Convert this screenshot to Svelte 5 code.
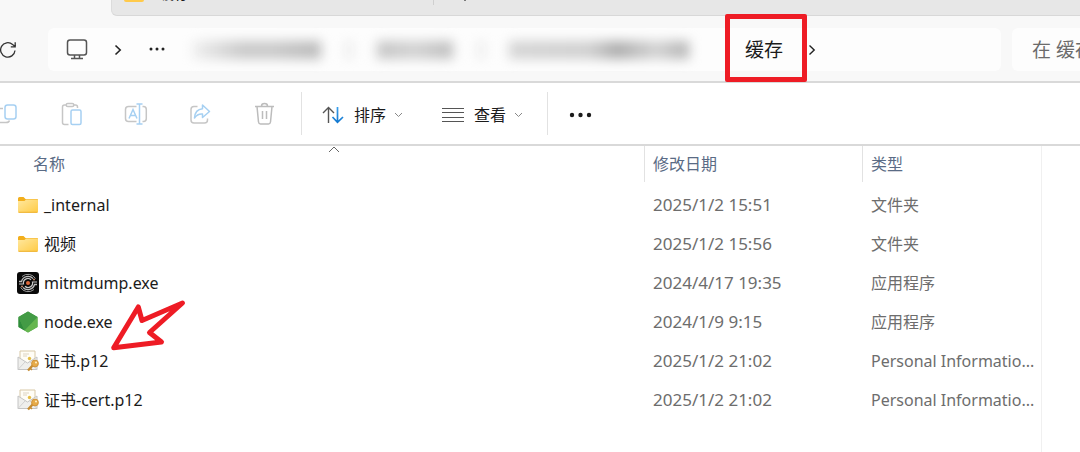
<script>
    const files = [
        { name: '_internal', icon: 'folder', date: '2025/1/2 15:51', type: '文件夹' },
        { name: '视频', icon: 'folder', date: '2025/1/2 15:56', type: '文件夹' },
        { name: 'mitmdump.exe', icon: 'mitm', date: '2024/4/17 19:35', type: '应用程序' },
        { name: 'node.exe', icon: 'node', date: '2024/1/9 9:15', type: '应用程序' },
        { name: '证书.p12', icon: 'cert', date: '2025/1/2 21:02', type: 'Personal Informatio...', marked: true },
        { name: '证书-cert.p12', icon: 'cert', date: '2025/1/2 21:02', type: 'Personal Informatio...' }
    ];

    let search = $state('');
</script>

{#snippet folder()}
    <svg class="file-icon" width="22" height="22" viewBox="0 0 22 22">
        <path d="M1 4.500Q1 3 2.500 3H6.500L8.500 5H20Q21 5 21 6V10H1Z" fill="#f2ae1c" />
        <path d="M1 7H7.500L9 5.500H20Q21 5.500 21 6.500V17.500Q21 18.500 20 18.500H2Q1 18.500 1 17.500Z" fill="url(#folder-fill)" />
        <path d="M1.500 18.300H20.500" stroke="#eeb027" stroke-width="1" />
    </svg>
{/snippet}

{#snippet chevronDown()}
    <svg width="9" height="6" viewBox="0 0 9 6" fill="none" stroke="#888" stroke-width="1">
        <path d="M1 1l3.500 3.500L8 1" />
    </svg>
{/snippet}

<div class="explorer">
    <!-- shared gradients -->
    <svg class="defs" width="0" height="0" aria-hidden="true">
        <defs>
            <linearGradient id="folder-fill" x1="0" y1="0" x2="1" y2="1">
                <stop offset="0" stop-color="#ffe8a0" />
                <stop offset="1" stop-color="#ffcb45" />
            </linearGradient>
            <linearGradient id="sort-fill" x1="0" y1="0" x2="0" y2="1">
                <stop offset="0" stop-color="#3ba0ec" />
                <stop offset="1" stop-color="#1177cf" />
            </linearGradient>
        </defs>
    </svg>

    <div class="tabs">
        <div class="tab">
            <span class="tab-folder"></span>
            <span class="tab-title">缓存</span>
        </div>
        <span class="tab-line"></span>
        <button class="new-tab" aria-label="新标签页">
            <svg width="12" height="12" viewBox="0 0 12 12" stroke="#333" stroke-width="1.200"><path d="M6 0v12M0 6h12" /></svg>
        </button>
    </div>

    <div class="address">
        <button class="refresh" aria-label="刷新">
            <svg width="18" height="18" viewBox="0 0 18 18" fill="none" stroke="#333" stroke-width="1.300">
                <path d="M15 9.500A7.200 7.200 0 1 1 12.600 3.500L15.200 5.600M15.200 1.200V5.800H10.800" />
            </svg>
        </button>
        <nav class="path">
            <button class="pc" aria-label="此电脑">
                <svg width="22" height="22" viewBox="0 0 22 22" fill="none" stroke="#555" stroke-width="1.500">
                    <rect x="1.500" y="1" width="19" height="15" rx="2.500" />
                    <path d="M8.500 16V19.500M13.500 16V19.500M5 19.500H17" />
                </svg>
            </button>
            <svg class="arrow" width="8" height="12" viewBox="0 0 8 12" fill="none" stroke="#222" stroke-width="1.600"><path d="M1.500 1.500L6.200 6L1.500 10.500" /></svg>
            <button class="more" aria-label="更多">
                <svg width="16" height="6" viewBox="0 0 16 6" fill="#222"><circle cx="2" cy="2" r="1.500" /><circle cx="8" cy="2" r="1.500" /><circle cx="14" cy="2" r="1.500" /></svg>
            </button>
            <div class="hidden-path">
                <span class="smudge first"></span>
                <span class="smudge dot"></span>
                <span class="smudge second"></span>
                <span class="smudge dot"></span>
                <span class="smudge third"></span>
            </div>
            <button class="crumb">缓存</button>
            <svg class="arrow last" width="8" height="12" viewBox="0 0 8 12" fill="none" stroke="#222" stroke-width="1.400"><path d="M1.500 1.500L6.200 6L1.500 10.500" /></svg>
        </nav>
        <input class="search" type="text" placeholder="在 缓存 中搜索" aria-label="搜索" bind:value={search} />
    </div>

    <div class="toolbar">
        <button class="tool" aria-label="复制">
            <svg width="24" height="24" viewBox="0 0 24 24" fill="none" stroke-width="1.500">
                <path d="M7 6.500H4Q1 6.500 1 9.500V17.500Q1 20.500 4 20.500H10Q13 20.500 13.500 18.500" stroke="#c6c6c6" />
                <rect x="9" y="3" width="11" height="14" rx="2.500" stroke="#a6d0f2" />
            </svg>
        </button>
        <button class="tool" aria-label="粘贴">
            <svg width="24" height="24" viewBox="0 0 24 24" fill="none" stroke-width="1.500">
                <path d="M6 3H4.500Q2.500 3 2.500 5V20.500Q2.500 22.500 4.500 22.500H8.500M14 3H15.500Q17.500 3 17.500 5V6" stroke="#c6c6c6" />
                <rect x="6.200" y="1.500" width="7.600" height="3" rx="1.500" stroke="#c6c6c6" />
                <rect x="11" y="8" width="10" height="14.500" rx="1.500" stroke="#a6d0f2" />
            </svg>
        </button>
        <button class="tool" aria-label="重命名">
            <svg width="24" height="24" viewBox="0 0 24 24" fill="none" stroke-width="1.500">
                <path d="M12.500 4.500H4.500Q1.500 4.500 1.500 7.500V16.500Q1.500 19.500 4.500 19.500H12.500M18.500 4.500H19.500Q22.300 4.500 22.300 7.500V16.500Q22.300 19.500 19.500 19.500H18.500" stroke="#c6c6c6" />
                <path d="M5 16.500L9 7.500L13 16.500M6.400 13.500H11.600M12.500 2H18.500M15.500 2V22M12.500 22H18.500" stroke="#a6d0f2" />
            </svg>
        </button>
        <button class="tool" aria-label="共享">
            <svg width="24" height="24" viewBox="0 0 24 24" fill="none" stroke-width="1.500" stroke-linejoin="round">
                <path d="M9.500 4.500H6Q3 4.500 3 7.500V18Q3 21 6 21H16.500Q19.500 21 19.500 18V16.500" stroke="#c6c6c6" />
                <path d="M14.500 3L21.500 9.500L14.500 15.500V12Q9.500 11.500 6.500 16Q7 7.500 14.500 6.800Z" stroke="#a6d0f2" />
            </svg>
        </button>
        <button class="tool" aria-label="删除">
            <svg width="24" height="24" viewBox="0 0 24 24" fill="none" stroke="#bcbcbc" stroke-width="1.500">
                <path d="M3 4.500H22M9.500 4Q9.500 1.500 12.500 1.500T15.500 4M5 4.500L6.500 20Q6.800 22 8.500 22H16.500Q18.200 22 18.500 20L20 4.500M10.500 9V17M14.500 9V17" />
            </svg>
        </button>
        <span class="divider"></span>
        <button class="menu">
            <svg width="22" height="18" viewBox="0 0 22 18" fill="none" stroke-width="1.400">
                <path d="M6.500 17V1.500M1 7L6.500 1.500L12 7" stroke="#555" />
                <path d="M15.500 1V16.500M10.500 11L15.500 16.300L21 11" stroke="url(#sort-fill)" stroke-width="1.700" />
            </svg>
            <span>排序</span>
            {@render chevronDown()}
        </button>
        <button class="menu">
            <svg width="22" height="18" viewBox="0 0 22 18" stroke="#555" stroke-width="1"><path d="M0 2.500H22M0 6.500H22M0 11.500H22M0 15.500H22" /></svg>
            <span>查看</span>
            {@render chevronDown()}
        </button>
        <span class="divider"></span>
        <button class="overflow" aria-label="查看更多">
            <svg width="24" height="6" viewBox="0 0 24 6" fill="#1b1b1b"><circle cx="4" cy="3" r="2.200" /><circle cx="12.500" cy="3" r="2.200" /><circle cx="21" cy="3" r="2.200" /></svg>
        </button>
    </div>

    <main>
        <table>
            <thead>
                <tr>
                    <th class="name">
                        <span>名称</span>
                        <svg class="sorted" width="12" height="7" viewBox="0 0 12 7" fill="none" stroke="#666" stroke-width="1"><path d="M1 6L6 1L11 6" /></svg>
                    </th>
                    <th class="date"><span>修改日期</span></th>
                    <th class="type"><span>类型</span></th>
                </tr>
            </thead>
            <tbody>
                {#each files as file}
                    <tr>
                        <td class="name">
                            <div class="file">
                                {#if file.icon === 'folder'}
                                    {@render folder()}
                                {:else if file.icon === 'mitm'}
                                    <svg class="file-icon" width="22" height="22" viewBox="0 0 22 22" fill="none">
                                        <rect width="22" height="22" rx="3" fill="#090909" />
                                        <path d="M2 9.500H4.500A6.800 6.800 0 0 1 16 6.500M20 12.500H17.500A6.800 6.800 0 0 1 6 15.500" stroke="#bbb" stroke-width="1.300" />
                                        <path d="M5 4.500A9 9 0 0 1 18.500 6.500M17 17.500A9 9 0 0 1 3.500 15.500" stroke="#999" stroke-width="1" />
                                        <path d="M2 12H6.500A4.500 4.500 0 0 1 14 7.800M20 10H15.500A4.500 4.500 0 0 1 8 14.200" stroke="#c8c8c8" stroke-width="1.200" />
                                        <circle cx="11" cy="11" r="2" fill="#e0683a" />
                                        <circle cx="17" cy="7.500" r="1" fill="#c98a6c" />
                                        <circle cx="5" cy="14.500" r="1" fill="#c98a6c" />
                                    </svg>
                                {:else if file.icon === 'node'}
                                    <svg class="file-icon" width="22" height="22" viewBox="0 0 22 22">
                                        <path d="M11 .5L20.500 6V16L11 21.500L1.500 16V6Z" fill="#46a148" />
                                        <path d="M1.500 6L7.500 19.400L1.500 16Z" fill="#2f8b3b" />
                                        <path d="M11 .5L20.500 6L7.500 19.400L1.500 6Z" fill="#439b45" />
                                        <path d="M20.500 6V16L11 21.500L7.500 19.400Z" fill="#65b64f" />
                                    </svg>
                                {:else}
                                    <svg class="file-icon" width="22" height="22" viewBox="0 0 22 22">
                                        <path d="M3 1H18V14H3Z" fill="#fffdf6" stroke="#d8c8a7" />
                                        <path d="M6 4H12M6 6H10" stroke="#ddd4c2" />
                                        <circle cx="12.500" cy="8.500" r="1.700" fill="#e5bd45" />
                                        <path d="M1 7L10.500 13L20 7V19.500H1Z" fill="#efefed" stroke="#c4c4c4" />
                                        <path d="M1 19.500L8 12M20 19.500L13 12" stroke="#d2d2d2" />
                                        <path d="M16.500 14.500L11 20.500" stroke="#c58b31" stroke-width="2.400" />
                                        <path d="M13 18L15 20" stroke="#c58b31" stroke-width="1.500" />
                                        <circle cx="18" cy="13.500" r="3.400" fill="#e6aa48" stroke="#cf933c" />
                                        <circle cx="19" cy="12.500" r="1" fill="#fff2c9" />
                                    </svg>
                                {/if}
                                <span>{file.name}</span>
                                {#if file.marked}
                                    <svg class="pointer" width="78" height="52" viewBox="0 0 78 52" fill="none" stroke="#ee1c25" stroke-width="5" stroke-linejoin="round">
                                        <path d="M3.700 48.700L28.300 8L32 21.500L72.500 4L39.500 33.500L51.500 43Z" />
                                    </svg>
                                {/if}
                            </div>
                        </td>
                        <td class="modified">{file.date}</td>
                        <td>{file.type}</td>
                    </tr>
                {/each}
            </tbody>
        </table>
        <aside></aside>
    </main>
</div>

<style>
    :global(body) {
        background: #fff;
    }

    .explorer {
        min-height: 100vh;
        display: flex;
        flex-direction: column;
        overflow: hidden;
        font-family: "Noto Sans", "Noto Sans CJK SC", sans-serif;
        font-size: 16px;
        line-height: 24px;
        color: #1b1b1b;
        background: #f8f8f8;
    }

    .defs {
        position: absolute;
    }

    button {
        display: flex;
        align-items: center;
        justify-content: center;
        padding: 0;
        border: 0;
        background: none;
        font: inherit;
        color: inherit;
    }

    svg {
        display: block;
        flex: none;
    }

    /* Tabs */
    .tabs {
        height: 15px;
        margin-left: 111px;
        display: flex;
        align-items: flex-end;
        overflow: hidden;
        background: #e7e7e7;
        border-bottom: 1px solid #d8d8d8;
        border-left: 1px solid #dcdcdc;
        border-bottom-left-radius: 6px;
    }

    .tab {
        display: flex;
        align-items: flex-end;
        gap: 14px;
        width: 309px;
        padding-left: 12px;
    }

    .tab-folder {
        width: 20px;
        height: 16px;
        margin-bottom: 13px;
        border-radius: 2px;
        background: #ffca4b;
    }

    .tab-title {
        margin-bottom: 10px;
    }

    .tab-line {
        width: 1px;
        height: 20px;
        margin-bottom: 10px;
        background: #cfcfcf;
    }

    .new-tab {
        margin: 0 0 14px 25px;
    }

    /* Address row */
    .address {
        display: flex;
        align-items: center;
        padding: 12px 0 10px;
        border-bottom: 2px solid #d9d9d9;
    }

    .refresh {
        width: 48px;
        justify-content: flex-start;
    }

    .path {
        flex: 1;
        display: flex;
        align-items: center;
        height: 43px;
        margin-right: 11px;
        border-radius: 6px;
        background: #fdfdfd;
    }

    .pc {
        margin: 0 26px 0 18px;
    }

    .more {
        margin: 0 24px 0 27px;
    }

    .hidden-path {
        display: flex;
        align-items: center;
        width: 532px;
        height: 43px;
        box-sizing: border-box;
        padding-left: 4px;
    }

    .smudge {
        height: 18px;
        filter: blur(6px);
        background: #c6c6c6;
    }

    .first {
        width: 128px;
        background: linear-gradient(90deg, #eee, #c8c8c8 40%, #cacaca 60%, #b9b9b9);
    }

    .dot {
        width: 8px;
        margin: 0 24px;
        background: #ececec;
    }

    .second {
        width: 76px;
        background: linear-gradient(90deg, #c4c4c4, #d2d2d2 50%, #bdbdbd);
    }

    .third {
        width: 180px;
        background: linear-gradient(90deg, #d4d4d4, #cfcfcf 45%, #acacac 60%, #d2d2d2 82%, #b2b2b2);
    }

    .crumb {
        position: relative;
        margin-left: 24px;
        font-size: 19px;
    }

    /* Red frame round the current folder */
    .crumb::after {
        content: "";
        position: absolute;
        inset: -24px -24px -20px -20px;
        border: 5px solid #ee1c25;
        border-radius: 2px;
    }

    .last {
        margin-left: 25px;
    }

    .search {
        width: 68px;
        height: 43px;
        box-sizing: border-box;
        padding: 0 0 0 20px;
        border: 0;
        border-radius: 6px 0 0 6px;
        background: #fdfdfd;
        font-family: inherit;
        font-size: 19px;
        color: #1b1b1b;
    }

    .search::placeholder {
        color: #6b6b6b;
    }

    /* Toolbar */
    .toolbar {
        display: flex;
        align-items: center;
        height: 61px;
        margin-left: -24px;
        border-bottom: 2px solid #d9d9d9;
        background: #fff;
    }

    .tool {
        width: 64px;
        height: 44px;
    }

    .divider {
        width: 1px;
        height: 43px;
        margin: 0 20px 0 5px;
        background: #e2e2e2;
    }

    .menu {
        gap: 10px;
        padding-top: 2px;
        margin-right: 39px;
    }

    .menu + .divider {
        margin-left: -15px;
    }

    .menu svg:last-child {
        margin-left: -2px;
    }

    .overflow {
        padding-top: 2px;
    }

    /* File list */
    main {
        flex: 1;
        display: flex;
        background: #fff;
    }

    table {
        flex: 1;
        align-self: flex-start;
        table-layout: fixed;
        border-collapse: collapse;
    }

    th {
        position: relative;
        height: 39px;
        padding: 0;
        text-align: left;
        vertical-align: top;
        font-weight: 400;
        color: #5a6b85;
    }

    th span {
        display: block;
        height: 30px;
        padding: 6px 0 0 8px;
        border-left: 1px solid #e2e2e2;
    }

    th.name span {
        padding-left: 32px;
        border-left-color: transparent;
    }

    .date {
        width: 218px;
    }

    .type {
        width: 179px;
    }

    .sorted {
        position: absolute;
        top: 0;
        left: 51%;
    }

    td {
        height: 39px;
        padding: 0 0 0 9px;
        white-space: nowrap;
        color: #6d6d6d;
    }

    td.name {
        padding-left: 17px;
        color: #1b1b1b;
    }

    td.modified {
        font-size: 17px;
    }

    .file {
        position: relative;
        display: flex;
        align-items: center;
        gap: 5px;
    }

    .pointer {
        position: absolute;
        left: 93px;
        bottom: 22px;
    }

    aside {
        width: 38px;
        border-left: 1px solid #f0f0f0;
    }
</style>
